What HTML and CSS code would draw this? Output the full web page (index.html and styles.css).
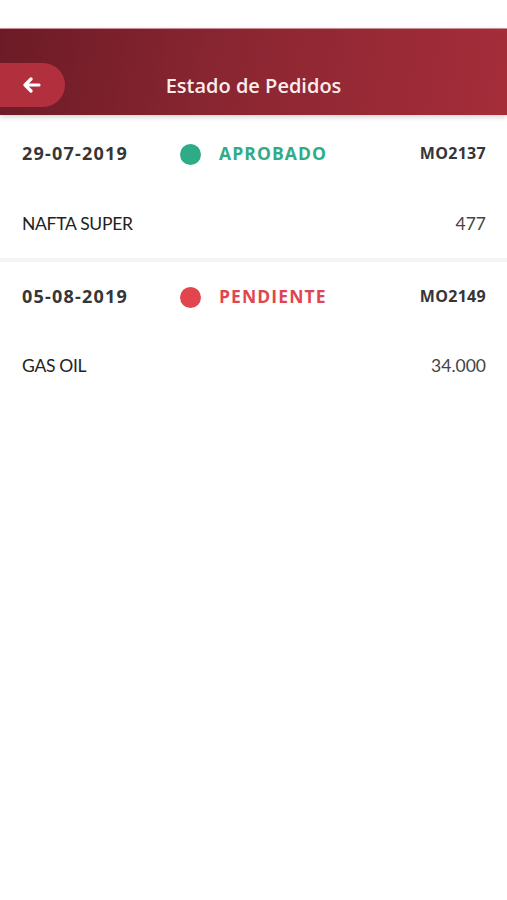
FILE: index.html
```html
<!DOCTYPE html>
<html lang="es">
<head>
<meta charset="utf-8">
<title>Estado de Pedidos</title>
<link rel="stylesheet" href="styles.css">
</head>
<body>
<div class="app">
  <header class="topbar">
    <button class="back" aria-label="Volver">
      <svg width="20" height="16" viewBox="0 0 20 16" aria-hidden="true">
        <path d="M9 2 L3 8 L9 14 M3 8 H17" fill="none" stroke="#fff" stroke-width="3.2" stroke-linecap="round" stroke-linejoin="round"/>
      </svg>
    </button>
    <h1 class="title">Estado de Pedidos</h1>
  </header>
  <main class="list">
    <section class="order">
      <div class="order-head">
        <span class="date">29-07-2019</span>
        <span class="status status-ok"><span class="dot"></span>APROBADO</span>
        <span class="code">MO2137</span>
      </div>
      <div class="order-line">
        <span class="product">NAFTA SUPER</span>
        <span class="qty">477</span>
      </div>
    </section>
    <section class="order">
      <div class="order-head">
        <span class="date">05-08-2019</span>
        <span class="status status-pending"><span class="dot"></span>PENDIENTE</span>
        <span class="code">MO2149</span>
      </div>
      <div class="order-line">
        <span class="product">GAS OIL</span>
        <span class="qty">34.000</span>
      </div>
    </section>
  </main>
</div>
</body>
</html>
```
FILE: styles.css
```css
* { box-sizing: border-box; }
html, body { margin: 0; padding: 0; background: #fff; }
body { font-family: "Open Sans", "Liberation Sans", sans-serif; color: #333; }

.app { padding-top: 28px; }

.topbar {
  height: 87px;
  background: linear-gradient(100deg, #6c1b26 0%, #8a2631 45%, #a52d3a 100%);
  box-shadow: 0 2px 5px rgba(0,0,0,0.18);
  display: flex;
  align-items: flex-end;
  padding-bottom: 8px;
  border-top: 1px solid #c98e95;
}

.back {
  flex: none;
  width: 65px;
  height: 44px;
  border: none;
  border-radius: 0 22px 22px 0;
  background: #b2303e;
  display: flex;
  align-items: center;
  padding-left: 22px;
  cursor: pointer;
}

.title {
  flex: 1;
  height: 44px;
  display: flex;
  align-items: center;
  justify-content: center;
  margin: 0 65px 0 0;
  color: #fbecec;
  font-size: 20px;
  font-weight: 600;
}

.list { display: flex; flex-direction: column; padding-top: 3px; }

.order {
  padding: 0 21px 0 22px;
  border-bottom: 4px solid #f4f4f4;
}
.order + .order { border-bottom: none; }

.order-head {
  display: flex;
  align-items: center;
  height: 70px;
}
.order + .order .order-head { height: 68px; }

.date {
  width: 158px;
  font-size: 18px;
  font-weight: 700;
  letter-spacing: 1.2px;
  color: #363636;
}

.status {
  display: flex;
  align-items: center;
  gap: 18px;
  font-size: 17.5px;
  font-weight: 700;
  letter-spacing: 1.1px;
}
.status .dot {
  width: 21px;
  height: 21px;
  border-radius: 50%;
  background: currentColor;
  margin-top: 2px;
}
.status-ok { color: #2fab87; }
.status-pending { color: #e04651; }
.status-pending .dot { background: #e2454d; }

.code {
  margin-left: auto;
  font-size: 16px;
  font-weight: 700;
  letter-spacing: 0.3px;
  color: #363636;
}

.order-line {
  display: flex;
  justify-content: space-between;
  align-items: center;
  height: 70px;
  font-family: Lato, "Open Sans", sans-serif;
  font-size: 17.5px;
}
.product { color: #222; letter-spacing: -0.3px; }
.qty { color: #444; }
```
